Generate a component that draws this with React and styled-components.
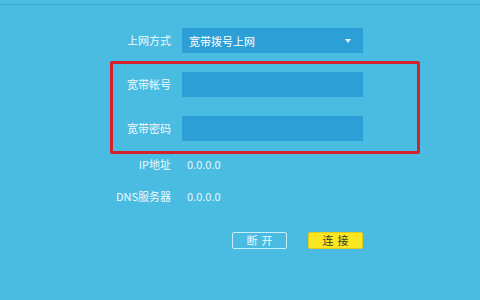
import React from 'react';
import styled, { createGlobalStyle } from 'styled-components';

const GlobalStyle = createGlobalStyle`
  html, body {
    margin: 0;
    padding: 0;
    background: #4bbce1;
  }
  * {
    box-sizing: border-box;
  }
`;

const labelWidth = '58px';
const controlWidth = '181px';

const Page = styled.div`
  width: 480px;
  height: 300px;
  overflow: hidden;
  background: #4bbce1;
  font-family: 'Noto Sans CJK SC', 'Noto Sans', sans-serif;
  font-size: 11px;
  color: #eef9fd;
`;

const TopBar = styled.div`
  height: 5px;
  border-bottom: 1px solid #37a7d0;
  background: #4dbde2;
`;

const Form = styled.div`
  display: flex;
  flex-direction: column;
  padding: 23px 0 0 110px;
`;

const Row = styled.div`
  display: grid;
  grid-template-columns: ${labelWidth} ${controlWidth};
  column-gap: 11px;
  align-items: center;
  height: ${(p) => p.$h || '25px'};
  margin-top: ${(p) => p.$mt || '0'};
  padding-left: 3px;
`;

const Label = styled.span`
  text-align: right;
  white-space: nowrap;
  line-height: 1;
`;

const Select = styled.div`
  height: 25px;
  background: #2c9fd6;
  display: flex;
  align-items: center;
  justify-content: space-between;
  padding: 0 12px 0 7px;
  color: #ffffff;
`;

const Caret = styled.span`
  width: 0;
  height: 0;
  border-left: 3.5px solid transparent;
  border-right: 3.5px solid transparent;
  border-top: 4px solid #e8f6fc;
  margin-top: 1px;
`;

const Highlight = styled.div`
  width: 310px;
  margin-top: 8px;
  border: 3px solid #d3222c;
  border-radius: 2px;
  padding: 8px 0 10px;
  display: flex;
  flex-direction: column;
  gap: 19px;

  & > ${Row} {
    padding-left: 0;
  }
`;

const Input = styled.div`
  height: 25px;
  background: #2c9fd6;
`;

const Value = styled.span`
  padding-left: 5px;
  color: #e6f6fc;
  line-height: 1;
`;

const Buttons = styled.div`
  display: flex;
  justify-content: flex-end;
  gap: 21px;
`;

const Button = styled.div`
  width: 55px;
  height: 17px;
  border-radius: 2px;
  display: flex;
  align-items: center;
  justify-content: center;
  letter-spacing: 4px;
  padding-left: 4px;
  font-size: 11px;
  line-height: 1;
  border: 1.5px solid ${(p) => (p.$primary ? '#e2cc1a' : '#c9eefb')};
  background: ${(p) => (p.$primary ? '#fbe622' : 'transparent')};
  color: ${(p) => (p.$primary ? '#3a3a2a' : '#eef9fd')};
`;

export default function App() {
  return (
    <Page>
      <GlobalStyle />
      <TopBar />
      <Form>
        <Row>
          <Label>上网方式</Label>
          <Select>
            <span>宽带拨号上网</span>
            <Caret />
          </Select>
        </Row>
        <Highlight>
          <Row>
            <Label>宽带帐号</Label>
            <Input />
          </Row>
          <Row>
            <Label>宽带密码</Label>
            <Input />
          </Row>
        </Highlight>
        <Row $h="18px" $mt="1px">
          <Label>IP地址</Label>
          <Value>0.0.0.0</Value>
        </Row>
        <Row $h="18px" $mt="14px">
          <Label>DNS服务器</Label>
          <Value>0.0.0.0</Value>
        </Row>
        <Row $h="17px" $mt="27px">
          <span />
          <Buttons>
            <Button>断开</Button>
            <Button $primary>连接</Button>
          </Buttons>
        </Row>
      </Form>
    </Page>
  );
}
